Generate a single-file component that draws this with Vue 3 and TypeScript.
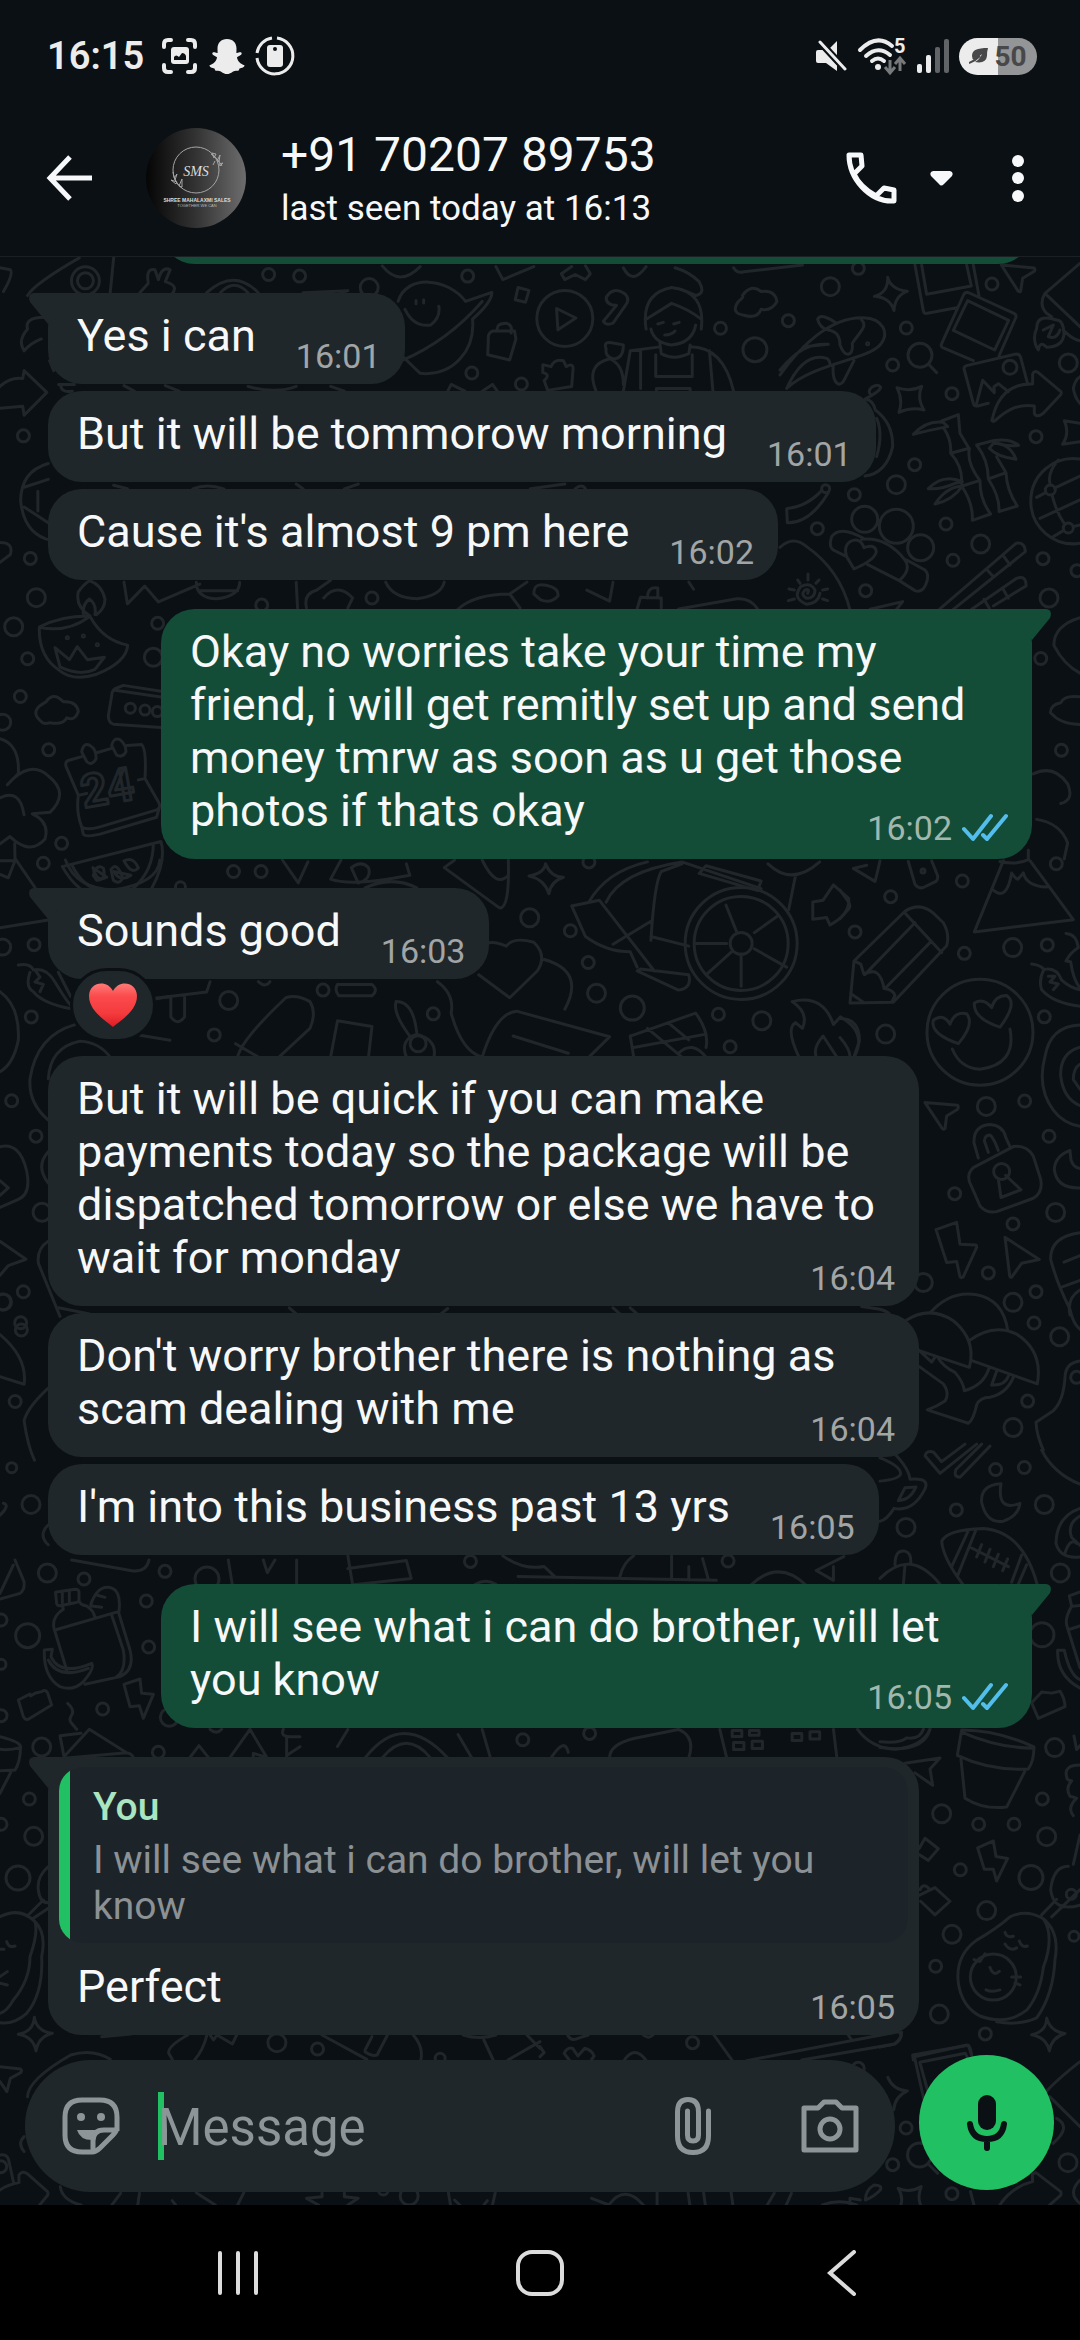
<script setup lang="ts">
import { ref } from 'vue'

interface Message {
  id: number
  from: 'me' | 'them'
  text: string
  time: string
  first?: boolean
  quote?: { author: string; text: string }
  reaction?: boolean
}

interface Patch {
  x: number
  y: number
  sx: number
  sy: number
  dots: number[][]
  lines: string
}

const draft = ref('')

const messages: Message[] = [
  { id: 1, from: 'them', text: 'Yes i can', time: '16:01', first: true },
  { id: 2, from: 'them', text: 'But it will be tommorow morning', time: '16:01' },
  { id: 3, from: 'them', text: "Cause it's almost 9 pm here", time: '16:02' },
  {
    id: 4,
    from: 'me',
    text: 'Okay no worries take your time my friend, i will get remitly set up and send money tmrw as soon as u get those photos if thats okay',
    time: '16:02',
    first: true,
  },
  { id: 5, from: 'them', text: 'Sounds good', time: '16:03', first: true, reaction: true },
  {
    id: 6,
    from: 'them',
    text: 'But it will be quick if you can make payments today so the package will be dispatched tomorrow or else we have to wait for monday',
    time: '16:04',
  },
  { id: 7, from: 'them', text: "Don't worry brother there is nothing as scam dealing with me", time: '16:04' },
  { id: 8, from: 'them', text: "I'm into this business past 13 yrs", time: '16:05' },
  { id: 9, from: 'me', text: 'I will see what i can do brother, will let you know', time: '16:05', first: true },
  {
    id: 10,
    from: 'them',
    text: 'Perfect',
    time: '16:05',
    first: true,
    quote: { author: 'You', text: 'I will see what i can do brother, will let you know' },
  },
]

// Wallpaper doodles, grouped in patches that each carry their own origin and scale.
// Dot radii are in wallpaper units so that they stay round.
const patches: Patch[] = [
  {
    x: 780, y: 250, sx: 0.3333, sy: 0.3333,
    dots: [[235,55,6],[151,110,9],[636,102,6],[25,212,6],[379,234,6],[338,345,6],[865,339,9],[516,431,6],[768,560,6],[404,644,6],[223,734,6],[349,704,9],[498,822,6],[112,836,6],[254,808,13],[349,829,17],[422,893,13],[602,882,9],[519,931,6],[257,1022,6],[789,926,6],[891,962,6],[807,1044,9],[420,316,12],[690,352,7],[811,720,5],[865,834,5],[263,281,1],[137,716,4]],
    lines: 'M323 82Q333 118 382 124Q345 136 342 182Q330 142 283 139Q325 128 323 82ZM405 45L430 182Q432 192 442 190L530 173M580 45L597 137M425 45L440 133L574 108L560 45M552 132Q558 124 568 129L702 190Q711 195 707 204L657 318M580 332L490 294Q481 290 485 281L552 132M563 152L686 211L644 300L520 241ZM560 347Q550 350 553 360L580 460Q583 470 593 468L625 460M560 347L705 313Q718 310 722 322L742 398M590 460L608 391L643 428L642 410L655 401L685 425M636 512C650 440 690 400 758 402L758 372Q762 360 774 367L842 424Q846 429 842 434L790 490Q770 505 763 490L763 468C710 462 680 480 645 512Q638 518 636 508ZM664 45L762 54Q767 58 763 64L728 85L722 124Q718 126 715 124ZM351 413Q390 427 425 409Q410 445 432 480Q395 470 357 487Q370 450 351 413ZM447 344L470 368M0 375C60 290 150 200 250 203C310 205 330 250 300 285C260 330 100 340 20 415M170 220C150 205 120 190 113 208Q120 235 145 240Q180 245 180 285C195 325 220 320 217 280C235 250 265 230 245 210M160 345C155 400 180 420 195 385L222 332M0 360C50 300 90 280 145 283L70 290M20 415C50 350 90 310 140 325Q150 330 150 345M400 553Q440 510 490 517L503 530Q450 540 400 553M485 513L535 494L540 550L568 597Q560 640 600 692Q600 750 632 792L577 811Q580 760 545 708Q550 650 512 610Q515 570 492 535M512 610L568 595M547 708L598 692M590 585L640 572M650 620L678 668Q680 720 712 768L657 785Q660 740 625 687Q625 630 590 585M625 687L678 668M640 572Q690 565 716 586Q680 590 655 580M628 595Q650 620 708 628Q690 580 640 580ZM445 716Q490 670 547 695L525 700Q480 720 445 716M547 708Q500 710 465 762Q520 750 547 708M275 437Q260 425 275 412Q295 400 302 412Q300 425 255 447Q280 450 286 480Q340 520 338 590Q320 670 255 678M290 505Q310 550 290 620M20 776Q80 770 125 722M20 776L22 818Q90 820 145 728M250 865Q180 825 155 860Q145 890 160 900L200 920L222 957Q285 930 289 905Q285 880 252 893Q240 860 210 875Q190 890 200 920M245 868Q320 860 375 930Q395 960 358 992L262 943M380 930L435 960Q450 975 437 1005Q425 1030 405 1022L358 992M478 1078L708 880Q735 875 736 905L520 1078M575 1078L710 985Q740 975 738 1008L640 1068M620 958L640 980M668 915L690 945M612 1048L628 1075M668 1015L685 1045M0 892Q40 855 80 890Q180 960 210 1080M83 1030Q90 1015 75 1020Q60 1035 80 1045Q105 1045 105 1020Q90 995 62 1010Q35 1045 80 1063Q115 1060 120 1030M84 972V990M117 990L108 1000M53 990L60 1000M27 1017L43 1020M143 1017L128 1020M25 1052L43 1047M143 1052L128 1047M270 1078L368 1055L350 1078M900 627A128 128 0 1 0 900 880M900 678L825 714M797 728L770 742M900 750L780 805M850 842L820 860M835 630Q800 670 811 705M816 735Q830 790 855 824M880 830L900 825M900 40L795 130Q775 165 800 190L815 200M795 130L900 230M855 245Q880 270 900 272M830 210Q770 190 770 235Q755 270 775 300Q780 270 800 292Q850 290 852 250Q850 210 830 210M790 240L820 225L805 260Q830 270 840 240M900 380Q885 390 880 415Q885 445 900 460M900 520L853 512Q870 550 848 583L900 575',
  },
  {
    x: 0, y: 250, sx: 0.6888, sy: 0.3954,
    dots: [[124,78,8],[124,78,14],[390,62,6],[435,66,6],[536,95,9],[679,66,6],[1046,198,6],[1096,252,12],[685,311,6],[757,339,6],[34,470,6],[44,780,6],[540,880,6],[380,898,6],[820,173,28],[1511,1033,6],[1541,1265,6]],
    lines: 'M578 130C590 60 650 70 676 130L714 107Q715 130 686 175C690 250 660 320 610 312L585 270M583 280Q650 230 700 130M588 150Q600 195 625 190Q640 170 637 142M604 128v8M615 126v8M808 148L836 172L810 202ZM752 95L768 102L763 132L748 126ZM880 120Q890 90 908 112Q915 125 908 140L890 185Q880 192 876 180L895 140Q880 140 880 120M715 205Q708 210 709 225L708 265L740 278L749 225L747 205ZM722 205Q720 185 735 185Q745 190 742 210M788 290L800 295Q805 275 818 280L822 295Q832 285 832 300L830 345L795 355L790 330Q800 315 788 310ZM938 200Q930 110 975 95Q1025 105 1018 200M938 175L975 135Q1000 150 1018 175M945 200Q950 235 975 240Q1005 235 1010 190M958 235L960 262Q978 280 1000 262L1002 240M905 357L915 255L958 245M1002 245Q1050 245 1065 357M930 255V350M1030 255L1035 357M952 265V320H1005V265M953 357V350H1002V357M865 355Q850 290 885 275Q905 290 905 340M880 250Q875 230 890 235L905 240Q905 275 890 275Q878 270 880 250M955 187L963 183M978 187L986 183M965 215Q975 215 980 205M1080 165Q1060 160 1072 130Q1080 120 1078 115Q1090 85 1105 105Q1125 100 1128 130Q1120 155 1105 150Q1100 175 1080 165M720 42L730 75L775 42M830 42L815 60L820 75L835 62L850 75L857 60L850 40M905 45Q918 90 938 42M980 45Q1000 55 1015 80Q1025 110 1010 115L990 100M555 40Q580 95 610 42M1065 45Q1070 60 1080 55L1165 38M0 45L15 50Q20 60 5 105M40 115Q50 85 115 20M165 20L160 108M215 80Q212 45 225 50L230 75Q235 40 247 50L240 80Q260 90 250 110M203 108L215 85M300 108Q340 45 375 108M320 108Q340 70 360 108M440 108L505 103L495 110M65 170Q35 170 40 200Q25 230 35 255Q45 235 60 225M72 280L78 305M0 345Q15 320 33 325L35 305L68 360L35 418L33 395L0 400M85 340H108M88 343Q90 362 105 357M180 343L195 357M240 343L260 357M360 345Q400 365 430 345M480 345L500 357M650 357L655 340L675 357M700 357L715 340L722 357M70 540Q30 560 30 635Q35 720 75 735M35 600L70 580M35 650L70 690M55 610V660M165 595L185 604M280 604Q300 590 325 604M430 592L440 604M500 604L520 592M770 604L820 592M835 604Q845 590 850 604M0 740Q20 740 15 770L0 790M180 840L185 895L210 850L230 890L290 845M285 840Q285 880 315 882Q348 875 348 840M290 862H345M430 840L432 905M445 905Q440 870 460 860L480 835M470 880Q490 840 512 880L505 905M560 840Q570 880 605 882Q640 875 645 840M665 908Q690 870 740 870L755 905M740 870L765 840M775 870Q775 840 793 848Q812 855 810 875Q800 895 785 885ZM852 860L885 888L890 840M925 908L930 878L960 880V905M940 880Q940 850 955 855V878M985 908L1070 882Q1090 880 1100 908M1000 840L1007 858M1568 930Q1530 950 1530 1000Q1545 1050 1568 1070M1568 1200Q1540 1200 1525 1170Q1525 1150 1540 1145Q1545 1125 1568 1130M1500 1325Q1530 1300 1550 1350Q1560 1390 1540 1400M1505 1440Q1540 1450 1550 1500L1545 1540',
  },
  {
    x: 0, y: 570, sx: 0.3333, sy: 0.4847,
    dots: [[109,57,9],[41,117,9],[83,183,6],[473,110,6],[460,180,9],[61,261,6],[146,371,6],[185,564,6],[130,605,6],[8,314,8],[391,285,5],[435,289,5],[472,292,5],[102,773,6],[94,922,6],[35,1095,6],[108,1168,6],[126,1325,9],[70,1489,6],[62,1553,6],[8,778,8],[8,1510,8],[202,140,1],[250,136,1],[292,154,1]],
    lines: 'M270 95Q225 75 235 45Q250 30 268 22Q305 30 315 60Q315 80 290 92M250 90Q248 70 268 60Q290 70 285 92M265 95Q180 95 118 118Q115 180 180 208Q220 230 290 215Q380 190 383 155Q310 145 272 98M118 118Q200 130 265 98M165 160L180 200Q240 220 285 205L313 180L262 185L232 158L208 185ZM120 310Q95 295 120 280Q130 275 138 272Q160 250 190 272Q230 270 235 292Q225 312 200 305Q190 320 150 315Q130 320 120 310M483 250L370 238L345 245Q335 250 335 260L325 300Q325 315 340 318L483 325M345 248L483 262M245 385L205 393Q195 395 198 405L235 465Q228 500 245 530Q260 538 300 530L470 495Q485 490 475 478L435 430Q440 370 425 360L380 362M335 368L290 377M235 465L260 461M415 433L435 430M245 530L250 545Q255 552 300 545L470 510L478 490M245 375Q250 355 270 362Q290 370 288 390Q275 405 260 395ZM335 362Q340 345 360 350Q378 360 378 375Q368 388 350 382ZM0 348Q60 360 55 420L22 443Q90 390 145 425Q210 460 150 500L97 503Q150 520 135 555Q90 590 30 550L0 565M0 470Q60 450 72 505M44 565L45 595L105 655M0 600L45 600L25 635L0 628M187 612L483 560Q500 600 455 657M187 612Q210 640 240 657M215 608Q250 655 300 660M460 565Q460 620 400 657M280 630Q290 605 310 615Q320 640 290 640ZM333 618Q350 600 368 635Q360 650 340 640ZM372 600Q400 590 415 615Q395 630 372 600M0 738L145 722M55 815Q90 810 100 825Q140 820 165 850Q200 890 215 900M90 830Q75 860 100 870Q130 895 215 905M105 825L120 840L105 850L130 855L120 870M175 830L212 880M0 870Q60 900 55 970Q40 1020 0 1035M145 1135Q85 1100 90 1050Q110 960 225 938M145 1050Q150 985 240 972Q300 975 330 1005M465 885L510 880M420 960L510 970M0 1190Q60 1180 80 1240Q95 1290 50 1300L0 1315M0 1260L25 1275L0 1290M0 1385L78 1422L25 1435L0 1455M145 1200Q105 1230 145 1265M145 1385Q110 1400 115 1430L180 1540',
  },
  {
    x: 0, y: 860, sx: 0.6888, sy: 0.3827,
    dots: [[339,30,6],[379,30,6],[262,70,5],[769,151,9],[828,185,6],[854,268,6],[866,348,9],[918,387,12],[629,402,6],[332,367,9],[469,340,6],[311,457,6],[1043,403,6],[1106,420,9],[1060,488,6],[855,5,6],[607,480,8],[1076,218,11],[1076,218,56],[1076,218,47],[5,1155,8],[31,1228,6],[22,1415,6]],
    lines: 'M95 0Q110 75 165 78Q230 60 232 0M135 20Q140 60 155 45ZM165 30Q175 60 190 40ZM410 0L433 60L447 5M480 50L495 0M480 50Q510 70 595 40L590 10M510 20Q525 0 535 20Q540 50 520 60ZM530 73Q570 40 605 73M645 20L660 0M645 20L725 125Q740 130 738 0M700 0Q720 75 738 40M792 10Q800 45 818 45Q800 55 797 88Q790 50 768 42Q790 35 792 10M830 120L870 105L950 290M855 110Q880 30 940 5M880 110Q900 30 990 5L1105 75M945 210Q950 60 960 30L990 10M1015 35L1100 80L1105 55L1025 15ZM830 120L850 200Q880 240 915 240L925 280M925 290L985 340Q1005 335 1000 300L930 285ZM1054 118L1070 190M1095 190L1130 145M1095 232L1142 280M1076 245L1076 330M1062 240L1025 300M1055 218H1010M1155 40L1145 130M945 200L1000 225M890 220L945 160M1115 10Q1150 70 1190 5M695 240Q705 200 735 225Q745 200 775 215Q795 250 780 290L740 360L695 300M790 260Q850 290 820 390M635 318Q660 350 655 400Q670 500 700 515Q720 400 750 395L885 462L855 515M745 460L825 505M222 362L300 345L305 318M248 360V410Q258 435 268 410V358M375 318Q385 335 392 318M490 325H540Q550 340 540 355H492Q485 340 490 325M345 515Q350 470 415 360Q430 350 450 370Q460 400 450 440L405 515M342 480L375 515M490 420L540 435L535 515M490 420L480 515M575 370Q600 370 605 450M575 370Q570 400 595 460M590 515Q580 470 605 455Q635 470 630 515M915 460L1010 400Q1030 450 1025 490M915 460L920 515M940 440L990 515M970 425L1000 470M920 490L1025 455M985 505Q1005 470 1025 515M1160 515Q1140 440 1155 425L1165 440Q1175 400 1150 370Q1195 350 1210 430L1220 410Q1260 450 1240 515M1185 515Q1180 490 1195 460L1215 515M1180 110L1195 105L1210 65L1232 100Q1235 140 1205 170L1200 150L1180 155ZM85 1170L130 1186M420 1170L430 1186M640 1186L650 1172M890 1170L900 1186M915 1170L925 1186M0 1240Q40 1300 35 1370L0 1350M70 1380Q40 1430 35 1465Q40 1530 50 1568',
  },
  {
    x: 840, y: 850, sx: 0.3333, sy: 0.3827,
    dots: [[649,36,6],[367,81,6],[152,122,6],[45,214,6],[373,270,6],[518,255,9],[622,248,6],[137,481,9],[613,436,6],[439,670,9],[554,656,6],[627,748,6],[344,898,6],[647,947,9],[519,977,6],[445,1105,6],[588,1154,6],[519,1182,9],[582,1236,6],[659,1272,9],[563,1440,6],[519,1509,9],[250,1130,9],[485,840,8],[249,55,2],[420,476,53],[710,1378,6]],
    lines: 'M80 40L40 48L105 82Q112 60 120 28M205 30L225 90Q235 102 250 98L288 82Q296 75 292 65L275 28M0 105L25 135Q35 150 22 158L0 180M490 28L403 214L700 182L570 28M480 30Q530 40 565 25V0M460 105Q500 135 515 60Q530 80 535 75L550 60Q560 95 620 97M30 400L42 290L195 160Q240 135 280 165L310 190Q330 220 320 250L160 398ZM195 165L305 268M225 190L75 325M272 240L135 362M42 290L62 298L72 325Q120 300 132 362Q160 365 165 380L155 398M32 375L70 398M355 506Q270 480 280 445Q310 425 330 455Q345 420 380 428Q405 455 355 506ZM480 463Q400 440 403 400Q430 385 455 412Q465 380 500 380Q535 400 480 463ZM337 520Q360 570 420 573Q530 560 510 468M255 660L353 667Q357 672 352 678L320 695L315 728Q311 732 307 728ZM400 830Q375 850 395 880L420 930Q440 950 470 945L580 910Q610 895 602 860L580 800Q560 770 520 775ZM415 805L402 765Q400 720 450 717Q490 720 497 750L510 775M445 790L433 760Q435 745 450 745Q460 750 475 785M475 860L483 908L543 888L497 850M720 883Q650 885 643 835Q645 800 690 785L693 810Q700 830 720 832M288 992L350 973L360 1030L408 1032Q412 1036 408 1042L370 1115Q365 1120 360 1115L350 1075L320 1078ZM495 1012L598 1070L545 1080L515 1116Q510 1118 509 1112ZM575 298Q600 300 612 312Q650 305 665 340Q690 360 720 365M612 312Q595 340 605 365Q640 400 720 408M625 330L645 330L630 345L655 350L640 365M678 218Q710 220 715 255Q690 270 678 290L692 292Q700 340 720 360M720 457Q630 460 615 540Q590 620 640 680Q670 715 720 722M720 515Q660 530 662 590Q670 650 720 668M720 560Q700 570 700 600L720 625M720 1000Q630 1010 632 1070Q650 1130 690 1200Q700 1240 720 1252M672 1077L720 1060M665 1142L720 1125M720 1150Q680 1170 690 1215M0 440Q60 440 58 500L42 540M0 490Q30 520 30 540M200 1228Q270 1190 340 1230Q410 1280 388 1352L238 1308M270 1210Q330 1150 410 1162Q490 1175 503 1255M388 1282Q460 1235 530 1265Q610 1310 592 1395L398 1335M238 1308L275 1338L285 1325M295 1328Q310 1350 345 1365Q370 1390 373 1413Q430 1400 447 1355M238 1350L310 1395Q330 1420 315 1440Q290 1455 262 1463L385 1498Q400 1490 410 1450Q420 1430 450 1430Q500 1420 520 1378M470 1362L455 1398Q495 1400 505 1375M720 1335Q675 1340 675 1380Q670 1440 640 1465L588 1495Q590 1530 610 1568M65 1193L120 1200Q140 1205 148 1212',
  },
  {
    x: 880, y: 1450, sx: 0.3333, sy: 0.389,
    dots: [[347,50,6],[433,45,6],[229,154,6],[493,140,9],[78,199,9],[541,316,9],[486,475,12],[524,765,9],[487,897,6],[185,935,9],[296,962,6],[402,962,6],[500,994,9],[241,1079,6],[453,1099,12],[320,1184,9],[216,1245,9],[167,1327,6],[178,1450,9],[316,1501,6],[340,1355,23],[574,1142,5],[582,1250,5]],
    lines: 'M255 -15L185 30L160 5Q140 0 135 15L180 60L290 -15M330 -10L240 70Q220 70 228 50L305 -15M0 80Q60 75 62 60Q60 40 0 20M20 -10Q85 40 90 75Q150 70 135 100Q100 160 42 150Q20 180 0 183M75 97L55 130Q90 130 108 95ZM485 0Q520 60 600 88M363 87Q300 90 305 135Q320 190 370 183Q415 170 420 137Q350 160 363 87ZM250 347Q190 280 185 235Q200 205 310 202Q430 210 472 347M215 300L265 207M232 325L288 205M395 340L425 270M415 345L440 295M275 252L385 300M305 243L290 275M330 255L315 288M355 268L340 300M383 280L368 310M45 295Q45 255 75 260Q95 265 92 292M0 330Q90 250 180 345M75 295L70 347M600 150Q530 170 528 240Q540 280 600 275M600 170Q560 190 575 225L600 245M555 265Q570 225 590 240M600 400L575 402L568 375L600 365M575 402Q555 430 560 450L600 560M565 462L600 452M600 590Q570 580 553 515H533Q530 580 600 612M455 650L475 690L555 660Q555 640 540 620L515 625L485 622ZM245 720Q350 720 462 763Q462 800 445 820Q330 825 232 785ZM245 725Q350 765 462 767M243 795L255 895Q310 925 380 918L435 825M75 805L180 792L150 820L158 862L105 830M0 765Q130 780 150 718M0 750Q60 755 80 740Q120 745 130 718M117 1025L135 998L175 1025L145 1055L117 1040M117 1145L165 1125L210 1160L165 1195L122 1160M120 1130Q130 1110 150 1130M293 1023L340 1005L348 1045L383 1050L350 1108L340 1078L313 1078ZM235 1370Q225 1300 290 1260Q350 1230 390 1200Q440 1180 490 1205Q525 1250 490 1330Q480 1400 440 1440Q380 1480 300 1455Q245 1430 235 1370M490 1205Q540 1240 525 1310Q520 1400 470 1460Q420 1480 350 1470M485 1195L530 1155M515 1200L600 1130M375 1240Q380 1255 400 1250M375 1270Q390 1290 410 1280M418 1262Q425 1280 442 1275M330 1330Q340 1355 358 1340M318 1388Q335 1395 360 1388M395 1355H422M405 1370L420 1375M282 1310L300 1315L315 1295M600 990L580 1065M600 1170Q520 1190 512 1130Q520 1070 565 1070M600 810Q550 810 560 840Q560 850 575 850Q555 870 570 890L590 895Q560 920 580 940M582 735L590 770L600 760M500 1460Q510 1495 555 1500Q515 1510 508 1545Q500 1510 455 1503Q500 1495 500 1460ZM100 1568L98 1555L265 1530L275 1555M65 1497Q65 1520 40 1528L0 1535',
  },
  {
    x: 0, y: 1560, sx: 0.3333, sy: 0.3333,
    dots: [[142,39,9],[252,57,6],[495,34,6],[621,57,12],[439,123,6],[83,227,12],[446,261,6],[308,447,6],[508,472,9],[125,561,9],[475,577,6],[88,717,6],[101,829,9],[54,954,12],[3,313,5],[3,467,6],[3,180,6],[3,793,6]],
    lines: 'M45 0L72 65Q75 90 60 100L0 117M0 100L40 15M215 0L400 33Q440 35 447 0M685 0L697 75M790 0L802 38L825 0M890 0V75M167 100Q165 95 175 95L225 88Q235 88 237 95L237 120Q235 128 225 128L180 137Q172 138 170 130ZM187 97V128M208 95V125M188 140L190 148Q155 170 162 205L200 330M237 122Q240 135 260 138Q280 150 285 172M165 210L355 155L390 270Q405 330 360 350L255 373M335 165L370 270Q380 330 350 350M272 135Q290 80 325 82Q365 85 357 155M290 105L315 112M275 138L305 142M133 270L157 268L153 290Q180 350 275 310Q285 325 250 365Q220 395 180 380Q130 350 133 270M145 300Q175 360 265 325M55 420L90 402L92 408L105 400L125 395Q140 385 145 405L155 435L85 478Q75 480 70 470ZM372 373L420 357L425 400L460 403L430 475L418 437L390 440ZM203 430Q225 450 215 465Q205 480 215 490L230 508M243 520L180 527L192 590L268 508L380 578Q395 580 400 592M200 594L380 578M570 592L597 557L625 592M690 592L750 508L800 592M760 592V580L800 592M850 508Q840 530 870 530H900M860 530V592M862 585L900 560M630 508Q650 525 665 508M0 530Q60 545 62 560Q60 610 45 630L0 632M0 568Q30 572 62 562M35 632L0 700M145 920Q110 950 115 990Q120 1030 145 1028M85 1065L130 1020M100 1075L145 1045M0 1070Q60 1040 105 1085Q115 1120 90 1190Q90 1260 40 1320Q20 1355 0 1360M105 1085Q140 1120 125 1190Q130 1300 80 1360Q40 1395 0 1388M20 1145Q25 1165 45 1158M0 1168H12M0 1250L22 1235M0 1270L22 1275M103 1372Q110 1415 157 1420Q115 1430 108 1473Q100 1430 55 1423Q100 1415 103 1372Z',
  },
  {
    x: 0, y: 1440, sx: 0.6888, sy: 0.3954,
    dots: [[17,70,5],[45,163,9],[683,307,6],[1057,306,6],[759,758,6],[856,742,6]],
    lines: 'M0 190Q15 165 5 160M70 215Q55 240 70 265M505 325L590 305L597 350L510 367M505 293L512 367M752 345L1040 355M730 293Q760 330 790 320L805 345M900 345Q905 310 920 293M975 293V350M1000 320V355M1020 300L1028 350M1090 367Q1130 300 1170 367M1225 295L1185 330L1210 355V320M690 365Q705 350 720 365M505 732L490 775M530 804Q585 680 650 804M555 804Q590 730 625 804M665 745L685 804M700 732L712 804M800 804Q820 750 825 790M885 804Q885 770 920 755L985 732Q1010 750 1000 804M1045 732L1055 804M1210 732L1215 804M1063 735h14v15h-14zM1088 735h14v12h-14zM1065 765h15v18h-15zM1092 762h15v18h-15zM1150 742h14v18h-14zM1176 738h14v18h-14zM1245 732Q1265 780 1300 782Q1340 775 1350 732',
  },
  {
    x: 0, y: 2030, sx: 0.3444, sy: 0.3333,
    dots: [[804,38,9],[922,57,6],[1278,85,5],[1188,498,9],[1113,480,5],[2,410,6]],
    lines: 'M295 20L380 12M500 88L490 70Q485 50 545 15M600 18Q590 60 565 90M610 15L620 30L630 15L675 42L687 15M935 15L1065 88M1060 60L1080 20M1060 65Q1080 80 1095 75L1125 15M1200 15Q1230 50 1222 90M1345 15Q1390 30 1440 15M1405 30L1432 90M1475 90L1568 35M1530 15L1568 55M0 110L60 117Q65 122 60 128L30 145L20 185L0 155M80 200Q80 150 205 75Q270 55 320 88M0 375Q20 370 25 390L40 460M0 480Q20 465 55 458V435Q65 420 80 432L138 485Q142 492 135 500L115 525M70 320Q50 340 70 365M175 470Q180 510 235 525M350 490L325 525M405 490L400 525M500 512L510 525M570 488L625 525M708 488L690 525M935 488V500L890 505L925 525M1000 488V500L1040 505L1010 525M1302 488L1308 525M1320 510L1335 525M1438 488L1430 525M1415 512L1405 525',
  },
  {
    x: 540, y: 2030, sx: 0.3444, sy: 0.3333,
    dots: [[443,38,6],[1063,294,6],[1024,404,6],[1196,491,6],[1533,398,9],[1102,375,12],[924,115,6]],
    lines: 'M0 50L12 68L0 80M80 15Q90 35 110 25L140 15M295 10Q312 30 328 15M85 90L70 70Q80 50 95 55L110 78L130 55Q150 60 157 78L150 88M245 90Q275 45 307 90M505 15L557 90M600 92L1040 5Q1060 15 1030 42L760 90M895 15L905 30M1010 142Q1025 180 1067 183Q1030 200 1027 240M1115 210L1087 80L1240 45Q1250 45 1253 75M1125 180L1103 97L1235 70L1240 80M1470 185Q1500 150 1568 95M1480 200L1568 290M1500 265Q1545 290 1490 340M1130 405L1155 430M1048 525Q1055 500 1040 475Q1075 490 1107 470Q1095 500 1105 525M1335 525Q1370 470 1430 455V432L1440 428L1512 485Q1515 492 1510 498L1480 525M1250 485L1260 525M1568 450Q1530 490 1568 520M945 510Q945 480 970 465Q995 465 988 480Q970 500 945 510M900 525V505L930 510M820 525Q870 505 920 525M200 525Q245 460 300 525M150 505L200 525M340 488V525M430 488L435 525M475 488L480 525M555 488L560 525M680 490L660 525M730 490L715 525',
  },
]
</script>

<template>
  <div class="screen">
    <div class="status">
      <div class="status-side">
        <span class="clock">16:15</span>
        <svg width="35" height="36" viewBox="0 0 35 36" fill="none" stroke="#ececec" stroke-width="4" stroke-linecap="round">
          <path d="M2 9V6Q2 2 6 2H9M26 2H29Q33 2 33 6V9M33 27V30Q33 34 29 34H26M9 34H6Q2 34 2 30V27" />
          <rect x="9" y="9" width="18" height="17" rx="3" fill="#ececec" stroke="none" />
          <path d="M12 22V19Q14 16 17 19L20 15Q23 15 24 18V22Z" fill="#0b1014" stroke="none" />
        </svg>
        <svg width="36" height="35" viewBox="0 0 36 35">
          <path d="M18 0C24 0 27.500 4 27.500 9.500L27.400 14C29 14.500 31 12.500 32.500 13.800C33.500 16 30 17 28 18.200C28.500 22 31.500 25 35.500 26.300C35.500 28.300 33 29 30.500 29.500C30 31 29.800 32 28 31.800C24 31 22.500 35 18 35C13.500 35 12 31 8 31.800C6.200 32 6 31 5.500 29.500C3 29 .5 28.300 .5 26.300C4.500 25 7.500 22 8 18.200C6 17 2.500 16 3.500 13.800C5 12.500 7 14.500 8.600 14L8.500 9.500C8.500 4 12 0 18 0Z" fill="#ececec" />
        </svg>
        <svg class="ring" width="40" height="40" viewBox="0 0 40 40" fill="none">
          <path d="M22 2A18 18 0 1 1 2 22M2 17A18 18 0 0 1 17 2" stroke="#ececec" stroke-width="3" />
          <rect x="12" y="9" width="16" height="22" rx="3" fill="#ececec" />
          <circle cx="20" cy="13" r="2" fill="#0b1014" />
        </svg>
      </div>
      <div class="status-side right">
        <svg width="33" height="32" viewBox="0 0 33 32" fill="#ececec">
          <path d="M22 1V18L14 9Z" />
          <path d="M3 10H8L22 25V31L11 23H3Q1 23 1 21V12Q1 10 3 10Z" />
          <path d="M5 2L30 29" stroke="#0b1014" stroke-width="7" />
          <path d="M5 2L30 29" stroke="#ececec" stroke-width="3" stroke-linecap="round" />
        </svg>
        <svg class="wifi" width="49" height="36" viewBox="0 0 49 36" fill="none">
          <g stroke="#ececec" stroke-width="4" stroke-linecap="round">
            <path d="M2 12Q19 -5 34 8" />
            <path d="M8 18Q20 7 32 17" />
            <path d="M14 23Q20 18 26 23" />
          </g>
          <circle cx="20" cy="29" r="3" fill="#ececec" />
          <path d="M32 22V34M27 29L32 35L37 29M42 33V21M37 26L42 20L47 26" stroke="#77797b" stroke-width="3" />
          <text x="36" y="15" class="band">5</text>
        </svg>
        <svg class="signal" width="32" height="34" viewBox="0 0 32 34">
          <rect x="0" y="25" width="5" height="9" rx="2" fill="#ececec" />
          <rect x="9" y="16" width="5" height="18" rx="2" fill="#ececec" />
          <rect x="18" y="8" width="5" height="26" rx="2" fill="#606467" />
          <rect x="27" y="0" width="5" height="34" rx="2" fill="#606467" />
        </svg>
        <div class="battery">
          <svg width="19" height="16" viewBox="0 0 19 16">
            <path d="M19 0C8 0 3 2 3 8Q3 11 5 12Q10 9 13 6Q11 11 6 14Q17 16 18 8Q18 3 19 0Z" fill="#48484a" />
            <path d="M0 15Q6 13 11 8" stroke="#48484a" stroke-width="2" fill="none" />
          </svg>
          <span>50</span>
        </div>
      </div>
    </div>

    <header class="header">
      <button class="icon-btn" aria-label="Back">
        <svg width="46" height="46" viewBox="0 0 46 46" fill="none" stroke="#f7f8fa" stroke-width="5">
          <path d="M46 23H5M24 2L4 23L24 44" />
        </svg>
      </button>
      <svg class="avatar" width="101" height="101" viewBox="0 0 101 101">
        <defs>
          <linearGradient id="avatarShade" x1="0" x2="1" y1="0" y2="0">
            <stop offset="0" stop-color="#050505" />
            <stop offset="0.5" stop-color="#333" />
            <stop offset="1" stop-color="#6d6d6d" />
          </linearGradient>
        </defs>
        <circle cx="50" cy="50" r="50" fill="url(#avatarShade)" />
        <g fill="none" stroke="#a5a5a5" stroke-width="1">
          <circle cx="50" cy="42" r="23" />
          <path d="M65 26Q72 30 76 38M68 30L66 25L70 26ZM71 33L74 27L73 34ZM73 36L77 35L74 38ZM69 33L67 37M36 60Q28 55 27 44M33 58L36 51L36 59ZM30 56L25 52L31 54ZM28 50L31 46L29 52" />
        </g>
        <text x="50" y="48" class="avatar-mono">SMS</text>
        <text x="51" y="74" class="avatar-name">SHREE MAHALAXMI SALES</text>
        <text x="51" y="79" class="avatar-tag">TOGETHER WE CAN</text>
      </svg>
      <div class="contact">
        <h1>+91 70207 89753</h1>
        <p>last seen today at 16:13</p>
      </div>
      <button class="icon-btn call" aria-label="Call">
        <svg width="51" height="52" viewBox="0 0 51 52" fill="none" stroke="#f7f8fa" stroke-width="5" stroke-linejoin="round">
          <path d="M3 3H15L16 14L8 22Q14 35 30 44L38 36L48 38V49Q30 50 16 35Q3 21 3 3Z" />
        </svg>
      </button>
      <button class="icon-btn caret" aria-label="Call options">
        <svg width="23" height="15" viewBox="0 0 23 15"><path d="M3 0H20Q24 1 22 5L14 13Q11 16 9 13L1 5Q-1 1 3 0Z" fill="#f7f8fa" /></svg>
      </button>
      <button class="icon-btn" aria-label="More options">
        <svg width="12" height="47" viewBox="0 0 12 47" fill="#f7f8fa">
          <circle cx="6" cy="6" r="6" /><circle cx="6" cy="23" r="6" /><circle cx="6" cy="41" r="6" />
        </svg>
      </button>
    </header>

    <main class="chat">
      <svg class="wallpaper" viewBox="0 257 1080 1948" preserveAspectRatio="xMidYMax slice" aria-hidden="true">
        <g v-for="(p, i) in patches" :key="i">
          <path :d="p.lines" :transform="`translate(${p.x} ${p.y}) scale(${p.sx} ${p.sy})`" vector-effect="non-scaling-stroke" />
          <circle v-for="(d, j) in p.dots" :key="j" :cx="p.x + d[0] * p.sx" :cy="p.y + d[1] * p.sy" :r="d[2]" />
        </g>
        <text x="84" y="808" transform="rotate(-10 84 808)" class="date-doodle">24</text>
      </svg>

      <div class="thread">
        <div class="bubble me earlier" aria-hidden="true"></div>
        <div v-for="m in messages" :key="m.id" class="row" :class="[m.from, { first: m.first, reacted: m.reaction }]">
          <div class="bubble" :class="[m.from, { tall: m.quote }]">
            <svg v-if="m.first && m.from === 'them'" class="tail" width="52" height="31" viewBox="0 0 52 31">
              <path d="M5 0H52L19 31L1 9Q-2 1 5 0Z" />
            </svg>
            <svg v-if="m.first && m.from === 'me'" class="tail" width="52" height="31" viewBox="0 0 52 31">
              <path d="M47 0H0L33 31L51 9Q54 1 47 0Z" />
            </svg>
            <blockquote v-if="m.quote" class="quote">
              <strong>{{ m.quote.author }}</strong>
              <span>{{ m.quote.text }}</span>
            </blockquote>
            <div class="text">
              {{ m.text }}
              <span class="meta">
                <time>{{ m.time }}</time>
                <svg v-if="m.from === 'me'" width="46" height="30" viewBox="0 0 46 30" fill="none" stroke="#53bdeb" stroke-width="4" stroke-linecap="round" stroke-linejoin="round">
                  <path d="M2 16L11 26L29 3M21 22L25 26L44 3" />
                </svg>
              </span>
            </div>
          </div>
          <button v-if="m.reaction" class="reaction" aria-label="Heart reaction">
            <svg width="50" height="46" viewBox="0 0 50 46">
              <defs>
                <linearGradient id="heartRed" x1="0" x2="0" y1="0" y2="1">
                  <stop offset="0" stop-color="#ff7a78" />
                  <stop offset="0.3" stop-color="#fb4a4c" />
                  <stop offset="0.7" stop-color="#f43a3d" />
                  <stop offset="1" stop-color="#dc1c24" />
                </linearGradient>
              </defs>
              <path d="M25 45C20 40 1 30 1 14C1 0 19 -3 25 9C31 -3 49 0 49 14C49 30 30 40 25 45Z" fill="url(#heartRed)" />
            </svg>
          </button>
        </div>
      </div>

      <form class="composer" @submit.prevent>
        <div class="field">
          <button type="button" class="icon-btn" aria-label="Stickers">
            <svg width="58" height="58" viewBox="0 0 58 58" fill="none" stroke="#8d9598" stroke-width="5" stroke-linejoin="round">
              <path d="M55 34V20Q55 3 38 3H20Q3 3 3 20V38Q3 55 20 55H30Q34 55 38 51L51 38Q55 34 55 30M31 54V44Q31 33 42 33H54" />
              <circle cx="19" cy="20" r="4" fill="#8d9598" stroke="none" />
              <circle cx="39" cy="20" r="4" fill="#8d9598" stroke="none" />
              <path d="M15 33H37Q31 37 30 43Q18 43 15 33Z" fill="#8d9598" stroke="none" />
            </svg>
          </button>
          <div class="entry">
            <span class="cursor"></span>
            <input v-model="draft" type="text" placeholder="Message" aria-label="Message" />
          </div>
          <button type="button" class="icon-btn attach" aria-label="Attach">
            <svg width="36" height="58" viewBox="0 0 36 58" fill="none" stroke="#8d9598" stroke-width="5" stroke-linecap="round">
              <path d="M33.500 14V39Q33.500 55.500 18 55.500Q2.500 55.500 2.500 39V15Q2.500 2.500 13 2.500Q23.500 2.500 23.500 15V38Q23.500 44 18 44Q12.500 44 12.500 38V14" />
            </svg>
          </button>
          <button type="button" class="icon-btn" aria-label="Camera">
            <svg width="58" height="54" viewBox="0 0 58 54" fill="none" stroke="#8d9598" stroke-width="5" stroke-linejoin="round">
              <path d="M3 9H17L23 3H35L41 9H55V51H3Z" />
              <circle cx="29" cy="30" r="10" />
            </svg>
          </button>
        </div>
        <button type="button" class="mic" aria-label="Record voice message">
          <svg width="40" height="56" viewBox="0 0 40 56" fill="none">
            <rect x="11" y="0" width="18" height="35" rx="9" fill="#0b1014" />
            <path d="M3 29Q5 44 20 44Q35 44 37 29M20 44V53" stroke="#0b1014" stroke-width="6" stroke-linecap="round" />
          </svg>
        </button>
      </form>
    </main>

    <nav class="navbar">
      <button class="icon-btn" aria-label="Recent apps">
        <svg width="40" height="44" viewBox="0 0 40 44" stroke="#dcdcdc" stroke-width="4" stroke-linecap="round">
          <path d="M2 2V42M20 2V42M38 2V42" />
        </svg>
      </button>
      <button class="icon-btn" aria-label="Home">
        <svg width="48" height="46" viewBox="0 0 48 46" fill="none" stroke="#dcdcdc" stroke-width="4">
          <rect x="2" y="2" width="44" height="42" rx="14" />
        </svg>
      </button>
      <button class="icon-btn" aria-label="Go back">
        <svg width="30" height="46" viewBox="0 0 30 46" fill="none" stroke="#dcdcdc" stroke-width="4" stroke-linecap="round">
          <path d="M27 2L3 23L27 44" />
        </svg>
      </button>
    </nav>
  </div>
</template>

<style>
body {
  background: #0b1014;
}
</style>

<style scoped>
.screen {
  display: flex;
  flex-direction: column;
  height: 100vh;
  overflow: hidden;
  background: #0b1014;
  color: #f7f8fa;
  font-family: Roboto, 'Liberation Sans', sans-serif;
}
svg {
  display: block;
  flex: none;
}
.icon-btn {
  display: flex;
  flex: none;
  padding: 0;
  border: 0;
  background: none;
}
.status {
  display: flex;
  flex: none;
  align-items: center;
  justify-content: space-between;
  box-sizing: border-box;
  height: 100px;
  padding: 12px 43px 0 47px;
}
.status-side {
  display: flex;
  align-items: center;
  gap: 12px;
}
.status-side.right {
  gap: 10px;
}
.clock {
  margin-right: 6px;
  color: #ececec;
  font-size: 38px;
  font-weight: 600;
  line-height: 40px;
}
.ring {
  margin-left: -2px;
}
.wifi {
  overflow: visible;
}
.band {
  fill: #ececec;
  font: 700 20px Roboto, sans-serif;
}
.battery {
  display: flex;
  align-items: center;
  justify-content: center;
  gap: 6px;
  box-sizing: border-box;
  width: 78px;
  height: 37px;
  border-radius: 19px;
  background: linear-gradient(90deg, #ececec 50%, #939597 50%);
  color: #48484a;
  font-size: 28px;
  font-weight: 700;
  line-height: 37px;
}
.header {
  display: flex;
  flex: none;
  align-items: center;
  box-sizing: border-box;
  height: 157px;
  padding: 0 56px 0 46px;
  border-bottom: 1px solid #1a2023;
}
.avatar {
  margin: 0 34px 0 54px;
}
.contact {
  flex: 1;
  min-width: 0;
}
.contact h1,
.contact p {
  margin: 0;
  font-weight: 400;
  white-space: nowrap;
}
.contact h1 {
  margin-bottom: 6px;
  font-size: 48px;
  line-height: 56px;
}
.contact p {
  font-size: 35px;
  line-height: 40px;
}
.avatar-mono {
  fill: #ddd;
  font: italic 14px 'Liberation Serif', serif;
  text-anchor: middle;
}
.avatar-name {
  fill: #ddd;
  font: 700 5px 'Liberation Sans', sans-serif;
  text-anchor: middle;
}
.avatar-tag {
  fill: #bbb;
  font: 4px 'Liberation Sans', sans-serif;
  text-anchor: middle;
}
.caret {
  margin: 0 59px 0 33px;
}
.chat {
  position: relative;
  display: flex;
  flex: 1;
  flex-direction: column;
  min-height: 0;
  overflow: hidden;
}
.wallpaper {
  position: absolute;
  inset: 0;
  width: 100%;
  height: 100%;
  fill: none;
  stroke: #20262a;
  stroke-width: 3px;
  stroke-linecap: round;
  stroke-linejoin: round;
}
.date-doodle {
  font: 700 46px Roboto, sans-serif;
}
.thread {
  position: relative;
  display: flex;
  flex: 1;
  flex-direction: column;
  justify-content: flex-end;
  min-height: 0;
  padding: 0 48px 20px;
}
.row {
  display: flex;
  flex: none;
  flex-direction: column;
  align-items: flex-start;
  margin-top: 7px;
}
.row.me {
  align-items: flex-end;
}
.row.first {
  margin-top: 29px;
}
.row.reacted {
  margin-bottom: 7px;
}
.bubble {
  position: relative;
  box-sizing: border-box;
  max-width: calc(100% - 113px);
  padding: 16px 24px 22px 29px;
  border-radius: 34px;
  background: #20272a;
}
.bubble.me {
  background: #144d37;
}
.bubble.tall {
  width: 100%;
  padding-top: 10px;
}
.earlier {
  flex: none;
  align-self: flex-end;
  width: 100%;
  height: 91px;
}
.tail {
  position: absolute;
  top: 0;
  left: -19px;
  fill: #20272a;
}
.me .tail {
  right: -19px;
  left: auto;
  fill: #144d37;
}
.text {
  font-size: 45px;
  line-height: 53px;
}
.meta {
  display: flex;
  float: right;
  align-items: center;
  gap: 10px;
  height: 40px;
  margin: 27px 0 -14px 40px;
  color: #a2a5a6;
  font-size: 34px;
  line-height: 40px;
}
.me .meta {
  margin-top: 24px;
  color: #a1b8af;
}
.quote {
  position: relative;
  margin: 0 -13px 17px -18px;
  padding: 17px 24px 14px 34px;
  overflow: hidden;
  border-radius: 24px;
  background: linear-gradient(90deg, #21c063 11px, #1d2429 11px);
}
.quote strong,
.quote span {
  display: block;
}
.quote strong {
  margin-bottom: 7px;
  color: #a9e5c0;
  font-size: 39px;
  font-weight: 500;
  line-height: 46px;
}
.quote span {
  color: #8b9194;
  font-size: 39px;
  line-height: 46px;
}
.reaction {
  position: relative;
  display: flex;
  align-items: center;
  justify-content: center;
  box-sizing: content-box;
  width: 80px;
  height: 68px;
  margin: -11px 0 0 22px;
  padding: 0;
  border: 3px solid #0b1014;
  border-radius: 37px;
  background: #20272a;
}
.composer {
  position: relative;
  display: flex;
  flex: none;
  align-items: flex-start;
  gap: 24px;
  padding: 0 26px 13px 25px;
}
.field {
  display: flex;
  flex: 1;
  align-items: center;
  box-sizing: border-box;
  min-width: 0;
  height: 132px;
  margin-top: 5px;
  padding: 0 36px 0 37px;
  border-radius: 66px;
  background: #20272a;
}
.entry {
  position: relative;
  flex: 1;
  min-width: 0;
  margin: 0 38px;
}
.entry input {
  position: relative;
  display: block;
  box-sizing: border-box;
  width: 100%;
  height: 68px;
  padding: 3px 0 0;
  border: 0;
  outline: 0;
  background: none;
  color: #f7f8fa;
  font: 51px/60px Roboto, sans-serif;
}
.entry input::placeholder {
  color: #8d9598;
  opacity: 1;
}
.cursor {
  position: absolute;
  top: 0;
  left: 0;
  width: 6px;
  height: 68px;
  background: #21c063;
}
.attach {
  margin-right: 90px;
}
.mic {
  display: flex;
  flex: none;
  align-items: center;
  justify-content: center;
  width: 135px;
  height: 135px;
  padding: 0;
  border: 0;
  border-radius: 50%;
  background: #21c063;
}
.navbar {
  display: flex;
  flex: none;
  align-items: center;
  height: 135px;
  padding: 0 8%;
  background: #000;
}
.navbar .icon-btn {
  flex: 1;
  justify-content: center;
}
</style>
